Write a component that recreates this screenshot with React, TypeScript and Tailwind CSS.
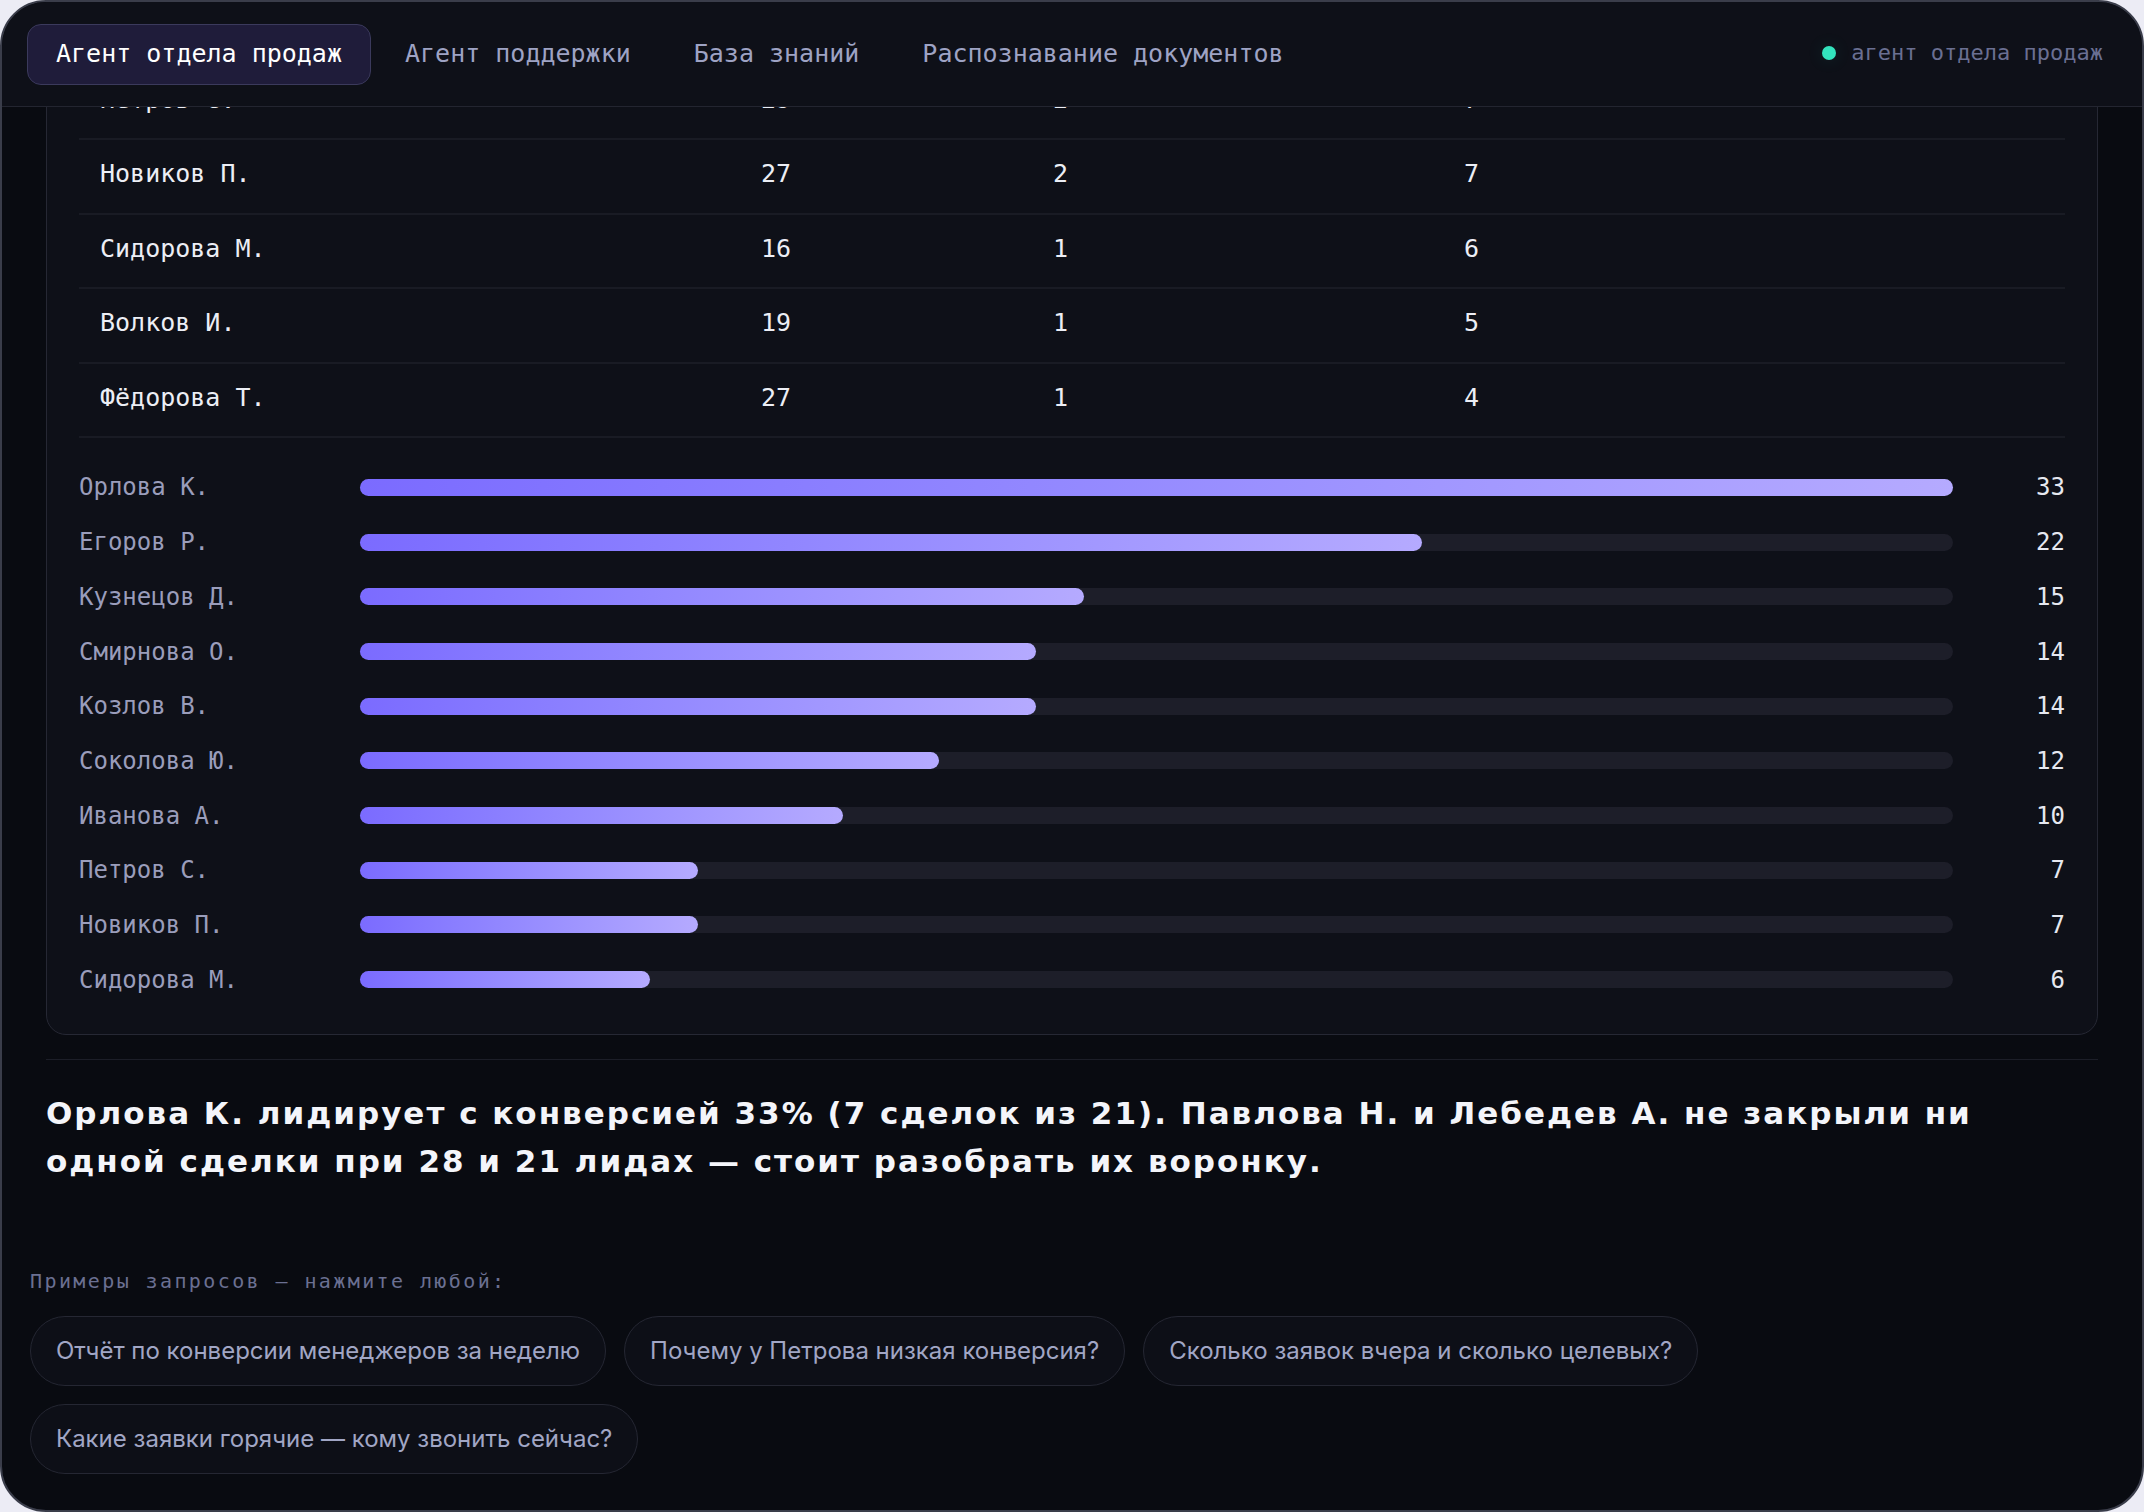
import React from "react";

const mono = "font-['DejaVu_Sans_Mono',monospace]";

const tabs = [
  "Агент отдела продаж",
  "Агент поддержки",
  "База знаний",
  "Распознавание документов",
];

interface Manager {
  name: string;
  leads: number;
  deals: number;
  conv: number;
}

const managers: Manager[] = [
  { name: "Орлова К.", leads: 21, deals: 7, conv: 33 },
  { name: "Егоров Р.", leads: 23, deals: 5, conv: 22 },
  { name: "Кузнецов Д.", leads: 20, deals: 3, conv: 15 },
  { name: "Смирнова О.", leads: 22, deals: 3, conv: 14 },
  { name: "Козлов В.", leads: 29, deals: 4, conv: 14 },
  { name: "Соколова Ю.", leads: 25, deals: 3, conv: 12 },
  { name: "Иванова А.", leads: 20, deals: 2, conv: 10 },
  { name: "Петров С.", leads: 29, deals: 2, conv: 7 },
  { name: "Новиков П.", leads: 27, deals: 2, conv: 7 },
  { name: "Сидорова М.", leads: 16, deals: 1, conv: 6 },
  { name: "Волков И.", leads: 19, deals: 1, conv: 5 },
  { name: "Фёдорова Т.", leads: 27, deals: 1, conv: 4 },
];

const prompts = [
  "Отчёт по конверсии менеджеров за неделю",
  "Почему у Петрова низкая конверсия?",
  "Сколько заявок вчера и сколько целевых?",
  "Какие заявки горячие — кому звонить сейчас?",
];

const Header = () => {
  return (
    <header className="flex h-[105px] shrink-0 items-center justify-between border-b border-[#232530] bg-[#0e1018] pl-[25px] pr-[39px]">
      <nav className={`flex items-center gap-[5px] ${mono}`}>
        {tabs.map((tab, i) => (
          <button
            key={tab}
            className={
              i === 0
                ? "flex h-[61px] items-center rounded-[14px] border-[1.5px] border-[#3b3a5c] bg-[#1f1c3a] px-[28px] text-[25px] text-white"
                : "flex h-[61px] items-center rounded-[14px] border-[1.5px] border-transparent px-[28px] text-[25px] text-[#9ea3c4]"
            }
          >
            {tab}
          </button>
        ))}
      </nav>
      <div className={`mb-[3px] flex items-center gap-[15px] ${mono}`}>
        <span className="size-[14px] rounded-full bg-[#33e3bd] shadow-[0_0_18px_rgba(51,227,189,0.12)]" />
        <span className="text-[22px] text-[#6a6f92]">агент отдела продаж</span>
      </div>
    </header>
  );
};

const ConversionCard = () => {
  const max = Math.max(...managers.map((m) => m.conv));

  return (
    <section className={`rounded-[20px] border border-[#262834] bg-[#0e1018] px-[32px] pt-[32px] pb-[27px] ${mono}`}>
      <h3 className="mb-[20px] text-[25px] text-[#eceef5]">Конверсия по менеджерам</h3>

      <div className="grid h-[74.5px] grid-cols-[661px_292px_411px_1fr] items-center border-b-2 border-[#191b24] px-[21px] pb-[5px] text-[22px] text-[#6a6f92]">
        <span>Менеджер</span>
        <span>Лиды</span>
        <span>Сделки</span>
        <span>Конверсия, %</span>
      </div>
      {managers.map((m) => (
        <div
          key={m.name}
          className="grid h-[74.5px] grid-cols-[661px_292px_411px_1fr] items-center border-b-2 border-[#191b24] px-[21px] pb-[5px] text-[25px] text-[#eceef5]"
        >
          <span>{m.name}</span>
          <span>{m.leads}</span>
          <span>{m.deals}</span>
          <span>{m.conv}</span>
        </div>
      ))}

      <div className="mt-[22px]">
        {managers.slice(0, 10).map((m) => (
          <div key={m.name} className="grid h-[54.7px] grid-cols-[281px_1fr_112px] items-center">
            <span className="text-[24px] text-[#9a9dbb]">{m.name}</span>
            <div className="h-[17px] rounded-full bg-[#1d1e29]">
              <div
                className="h-full rounded-full bg-linear-to-r from-[#7b6bff] to-[#b5aaff]"
                style={{ width: `${(m.conv / max) * 100}%` }}
              />
            </div>
            <span className="text-right text-[24px] text-[#e6e8f0]">{m.conv}</span>
          </div>
        ))}
      </div>
    </section>
  );
};

export default function App() {
  return (
    <div className="h-[1512px] w-[2144px] bg-[#ececf5]">
      <div className="flex h-full flex-col overflow-hidden rounded-[46px] border-2 border-[#3a3d4a] bg-[#090b11]">
        <Header />

        <main className="flex min-h-0 flex-1 flex-col justify-end overflow-hidden">
          <div className="shrink-0 px-[44px]">
            <ConversionCard />
            <div className="mt-[24px] border-t border-[#1c1e28] pt-[29px]">
              <p className="max-w-[1990px] font-['DejaVu_Sans',sans-serif] text-[31px] leading-[48px] font-bold tracking-[2px] text-[#f4f5fa]">
                Орлова К. лидирует с конверсией 33% (7 сделок из 21). Павлова Н. и Лебедев А. не закрыли ни одной сделки при 28 и 21 лидах — стоит разобрать их воронку.
              </p>
            </div>
          </div>

          <div className="shrink-0 px-[28px] pt-[82px] pb-[36px]">
            <p className={`text-[20px] leading-[28px] tracking-[2.4px] text-[#6b7092] ${mono}`}>
              Примеры запросов — нажмите любой:
            </p>
            <div className="mt-[21px] flex flex-wrap gap-[18px] font-['Inter',sans-serif]">
              {prompts.map((p) => (
                <button
                  key={p}
                  className="flex h-[70px] items-center rounded-full border border-[#252733] bg-[#0d0f17] px-[25px] text-[24px] text-[#a1a6c5]"
                >
                  {p}
                </button>
              ))}
            </div>
          </div>
        </main>
      </div>
    </div>
  );
}
